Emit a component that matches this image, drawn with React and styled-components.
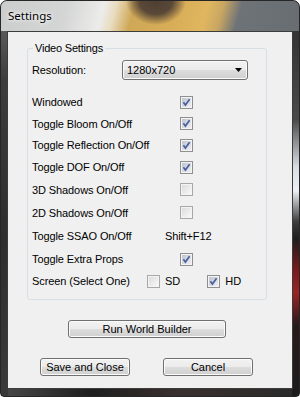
import styled, { createGlobalStyle } from 'styled-components';

const GlobalStyle = createGlobalStyle`
    body {
        margin: 0;
        background: #ffffff;
    }
`;

const CheckBox = ({ checked }) => (
    <Box>
        <svg width="13" height="13" viewBox="0 0 13 13">
            <defs>
                <linearGradient id={checked ? 'cbOn' : 'cbOff'} x1="0" y1="0" x2="1" y2="1">
                    <stop offset="0" stopColor={checked ? '#bfc5ce' : '#dcdcdc'} />
                    <stop offset="1" stopColor={checked ? '#eceef1' : '#f8f8f8'} />
                </linearGradient>
            </defs>
            <rect x="0.5" y="0.5" width="12" height="12" fill="#f4f4f4" stroke={checked ? '#8e8f8f' : '#a8a8a8'} />
            <rect x="2" y="2" width="9" height="9" fill={`url(#${checked ? 'cbOn' : 'cbOff'})`} />
            {checked && (
                <path d="M3.4 6.3 L5.4 9 L9.6 3.2" fill="none" stroke="#4a5e9e" strokeWidth="1.7" />
            )}
        </svg>
    </Box>
);

const toggles = [
    { label: 'Windowed', checked: true, h: 22 },
    { label: 'Toggle Bloom On/Off', checked: true, h: 21 },
    { label: 'Toggle Reflection On/Off', checked: true, h: 22 },
    { label: 'Toggle DOF On/Off', checked: true, h: 22 },
    { label: '3D Shadows On/Off', checked: false, h: 23 },
    { label: '2D Shadows On/Off', checked: false, h: 23 },
];

const App = () => {
    return (
        <>
            <GlobalStyle />
            <Window>
                <TitleBar>Settings</TitleBar>
                <Frame>
                    <Client>
                        <Group>
                            <Legend>Video Settings</Legend>
                            <Row h={20} top={5}>
                                <Label w={90}>Resolution:</Label>
                                <Select>
                                    <span>1280x720</span>
                                    <svg width="7" height="4" viewBox="0 0 7 4">
                                        <path d="M0 0 H7 L3.5 4 Z" fill="#000" />
                                    </svg>
                                </Select>
                            </Row>
                            <Row h={22} top={11}>
                                <Label w={148}>{toggles[0].label}</Label>
                                <CheckBox checked={toggles[0].checked} />
                            </Row>
                            {toggles.slice(1).map(t => (
                                <Row h={t.h} key={t.label}>
                                    <Label w={148}>{t.label}</Label>
                                    <CheckBox checked={t.checked} />
                                </Row>
                            ))}
                            <Row h={24}>
                                <Label w={133}>Toggle SSAO On/Off</Label>
                                <Label>Shift+F12</Label>
                            </Row>
                            <Row h={22}>
                                <Label w={148}>Toggle Extra Props</Label>
                                <CheckBox checked />
                            </Row>
                            <Row h={22}>
                                <Label w={115}>Screen (Select One)</Label>
                                <Option gap={27}>
                                    <CheckBox />
                                    <span>SD</span>
                                </Option>
                                <Option>
                                    <CheckBox checked />
                                    <span>HD</span>
                                </Option>
                            </Row>
                        </Group>
                        <Button w={158} left={60} top={20}>Run World Builder</Button>
                        <ButtonRow>
                            <Button w={90}>Save and Close</Button>
                            <Button w={90}>Cancel</Button>
                        </ButtonRow>
                    </Client>
                </Frame>
            </Window>
        </>
    );
};

const Window = styled.div`
    box-sizing: border-box;
    width: 300px;
    height: 397px;
    display: flex;
    flex-direction: column;
    border: 1px solid #262626;
    border-radius: 7px 7px 4px 4px;
    overflow: hidden;
    background:
        linear-gradient(180deg, #2c2c2c 0%, #4a4a4a 30%, #d8dde2 42%, #eef2f5 48%, #3a3a3a 56%, #1e1e1e 60%, #7a1a1a 68%, #9a2424 74%, #2a1a1a 82%, #1c1c1c 100%) right top / 7px 100% no-repeat,
        linear-gradient(180deg, #6a6a6a 0%, #3c3c3c 20%, #2e2e2e 60%, #3a3a3a 100%) left top / 7px 100% no-repeat,
        linear-gradient(90deg, #4a4a4a 0%, #1e1e1e 30%, #3a3030 60%, #2a2a2a 100%);
`;

const TitleBar = styled.div`
    height: 29px;
    flex: none;
    display: flex;
    align-items: center;
    padding: 0 0 1px 7px;
    font-family: "Noto Sans", "DejaVu Sans", sans-serif;
    font-size: 11.5px;
    color: #000;
    text-shadow: 0 0 6px #fff, 0 0 3px #fff;
    background:
        radial-gradient(ellipse 30px 24px at 155px 0px, #4e3f32 0%, #5a4838 55%, rgba(90, 72, 56, 0) 100%),
        linear-gradient(105deg, #cbcccc 0%, #d4d5d5 22%, #ececea 34%, #e9dcc0 38%, #cfa857 44%, #d8ad57 58%, #e0b65f 68%, #c9a763 73%, #6e7378 79%, #686d72 100%);
`;

const Frame = styled.div`
    flex: 1;
    display: flex;
    padding: 0 6px 7px 6px;
`;

const Client = styled.div`
    flex: 1;
    display: flex;
    flex-direction: column;
    align-items: flex-start;
    background: #f0f0f0;
    border: 1px solid #3c3c3c;
    font-family: "Liberation Sans", Arial, sans-serif;
    font-size: 11px;
    color: #000;
`;

const Group = styled.fieldset`
    box-sizing: border-box;
    width: 240px;
    margin: 10px 0 0 19px;
    padding: 0 4px 7px 4px;
    border: 1px solid #d5dfe5;
    border-radius: 3px;
    display: flex;
    flex-direction: column;
`;

const Legend = styled.legend`
    padding: 0 2px;
    margin-left: 1px;
    font-size: 11px;
    line-height: 13px;
    letter-spacing: -0.2px;
`;

const Row = styled.div`
    display: flex;
    align-items: center;
    height: ${props => props.h}px;
    margin-top: ${props => props.top || 0}px;
`;

const Label = styled.span`
    flex: none;
    width: ${props => props.w ? `${props.w}px` : 'auto'};
    white-space: nowrap;
    letter-spacing: -0.1px;
`;

const Box = styled.span`
    display: block;
    width: 13px;
    height: 13px;
    & svg {
        display: block;
    }
`;

const Option = styled.label`
    display: flex;
    align-items: center;
    gap: 5px;
    margin-right: ${props => props.gap || 0}px;
`;

const Select = styled.div`
    box-sizing: border-box;
    width: 126px;
    height: 20px;
    display: flex;
    align-items: center;
    justify-content: space-between;
    padding: 0 5px 0 4px;
    border: 1px solid #707070;
    border-radius: 3px;
    background: linear-gradient(180deg, #f2f2f2 0%, #ebebeb 50%, #dddddd 51%, #cfcfcf 100%);
    box-shadow: inset 0 0 0 1px #fbfbfb;
`;

const Button = styled.button`
    box-sizing: border-box;
    width: ${props => props.w}px;
    height: 18px;
    margin: ${props => props.top || 0}px 0 0 ${props => props.left || 0}px;
    padding: 0;
    font-family: "Liberation Sans", Arial, sans-serif;
    font-size: 11px;
    color: #000;
    border: 1px solid #707070;
    border-radius: 3px;
    background: linear-gradient(180deg, #f2f2f2 0%, #ebebeb 50%, #dddddd 51%, #cfcfcf 100%);
    box-shadow: inset 0 0 0 1px #fbfbfb;
`;

const ButtonRow = styled.div`
    display: flex;
    gap: 33px;
    margin: 20px 0 0 32px;
`;

export default App;
